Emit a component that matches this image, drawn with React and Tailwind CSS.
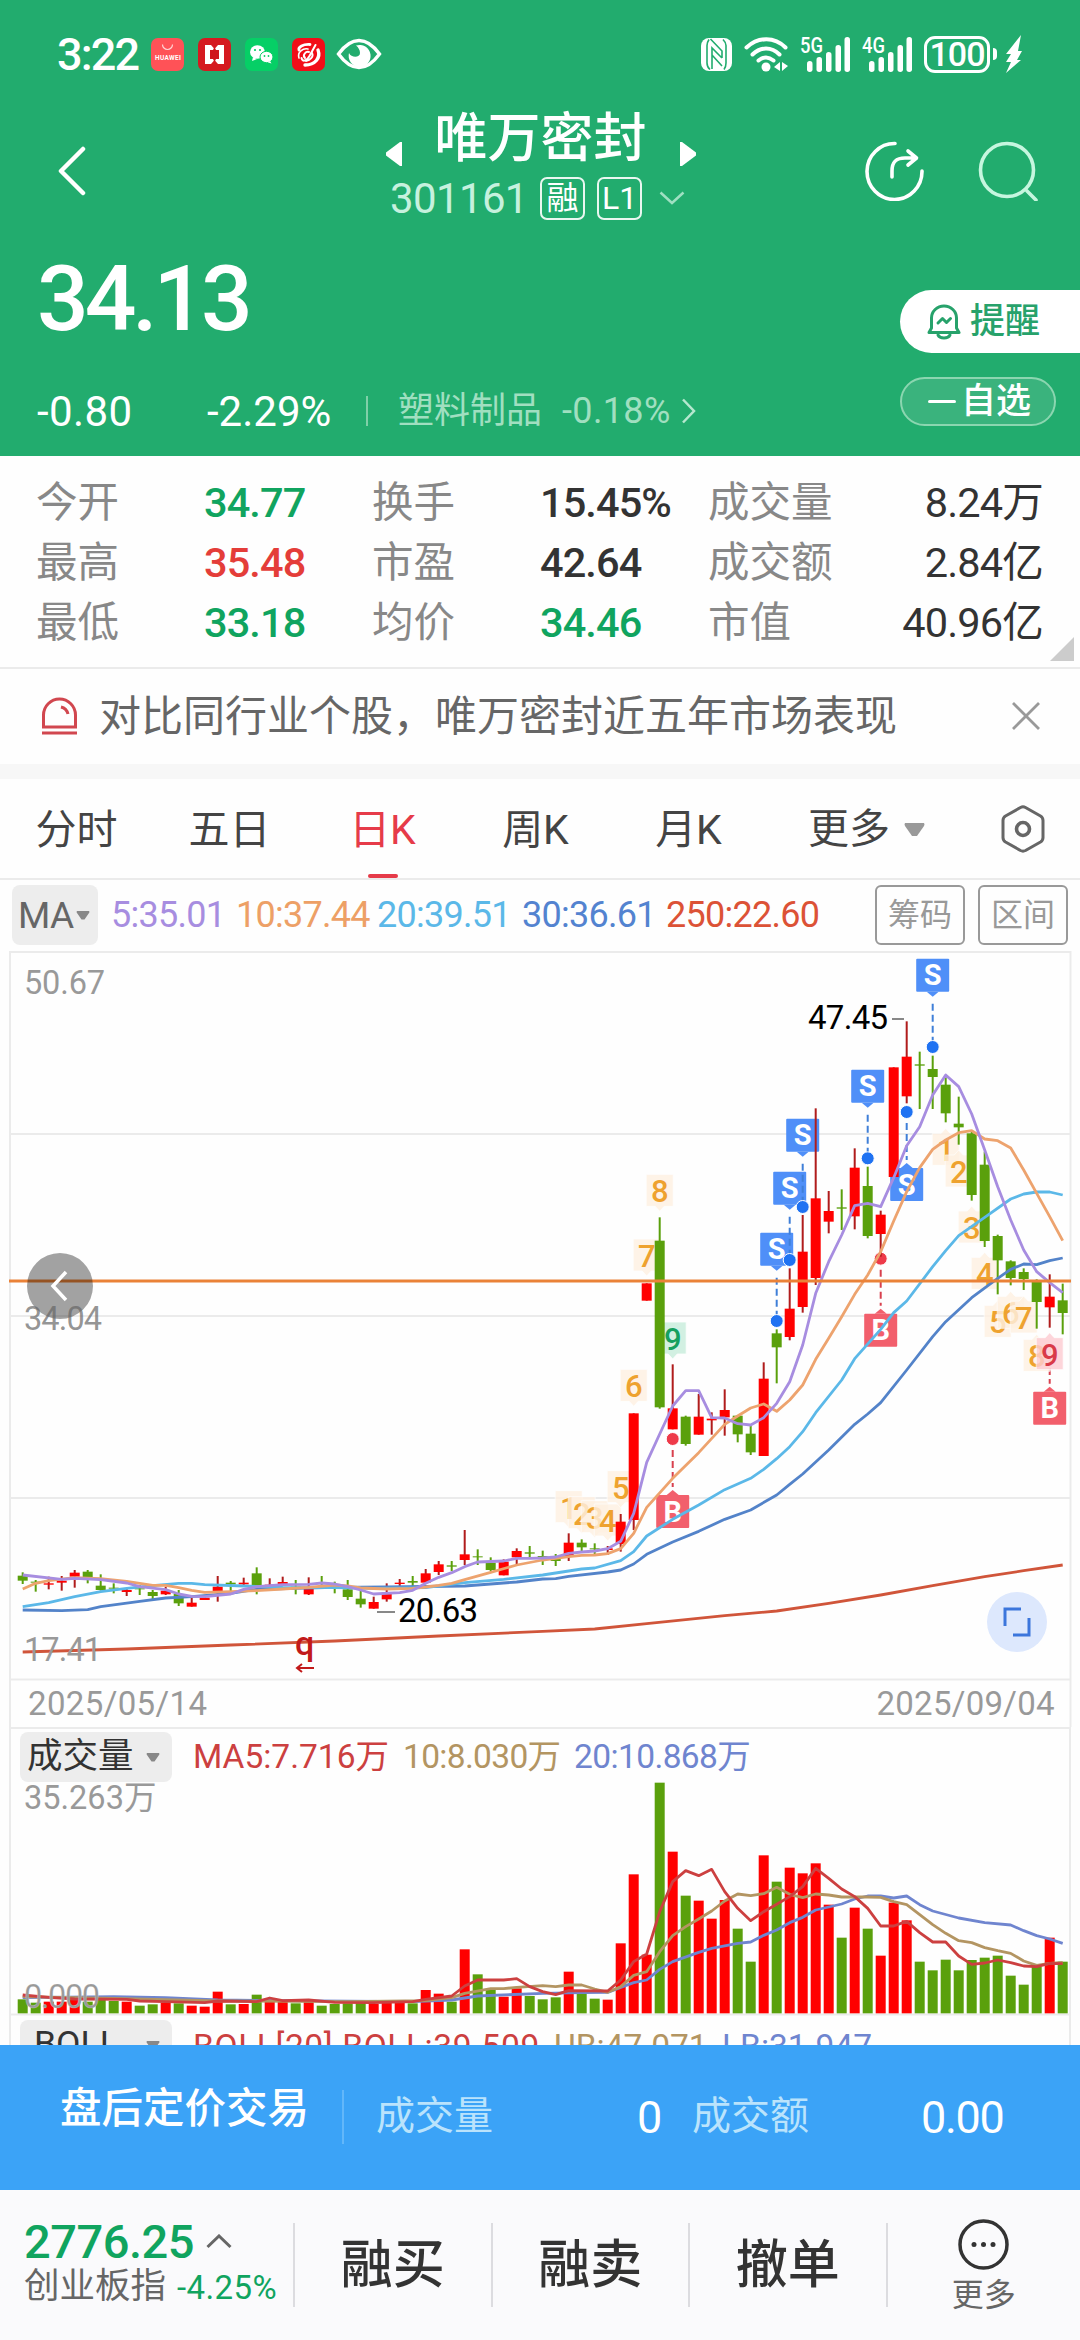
import clsx from "clsx";

const UP = "#ff0000";
const DOWN = "#5aa00c";

// Candle series: direction, body top, body bottom, high, low (1/3 px units)
const CANDLES = [
  ["g", 1907, 1922, 1897, 1932], ["g", 1925, 1928, 1920, 1955], ["r", 1930, 1934, 1910, 1948],
  ["r", 1922, 1928, 1908, 1952], ["r", 1898, 1910, 1890, 1943], ["g", 1895, 1920, 1890, 1930],
  ["g", 1937, 1950, 1903, 1952], ["g", 1943, 1946, 1930, 1960], ["r", 1950, 1956, 1945, 1968],
  ["g", 1945, 1948, 1935, 1965], ["g", 1956, 1968, 1950, 1978], ["r", 1952, 1963, 1940, 1965],
  ["g", 1962, 1990, 1950, 1998], ["r", 1988, 2000, 1972, 2000], ["r", 1973, 1980, 1968, 1980],
  ["r", 1940, 1958, 1908, 1985], ["g", 1928, 1933, 1923, 1955], ["r", 1928, 1933, 1913, 1940],
  ["g", 1900, 1938, 1882, 1963], ["r", 1934, 1938, 1915, 1945], ["r", 1926, 1932, 1910, 1935],
  ["g", 1940, 1943, 1920, 1963], ["r", 1943, 1963, 1912, 1965], ["g", 1928, 1932, 1908, 1940],
  ["g", 1940, 1943, 1925, 1960], ["g", 1948, 1971, 1920, 1980], ["g", 1976, 1993, 1950, 2003],
  ["r", 1986, 2006, 1970, 2006], ["r", 1958, 1978, 1930, 1985], ["r", 1928, 1932, 1917, 1942],
  ["g", 1923, 1928, 1908, 1943], ["r", 1900, 1928, 1887, 1930], ["r", 1873, 1896, 1863, 1905],
  ["g", 1876, 1880, 1863, 1893], ["r", 1843, 1860, 1770, 1875], ["g", 1849, 1852, 1828, 1875],
  ["g", 1868, 1890, 1852, 1893], ["r", 1865, 1906, 1858, 1906], ["r", 1833, 1852, 1825, 1873],
  ["g", 1837, 1841, 1818, 1852], ["g", 1848, 1852, 1832, 1875], ["g", 1857, 1863, 1842, 1878],
  ["r", 1808, 1848, 1780, 1863], ["g", 1808, 1822, 1798, 1835], ["g", 1825, 1828, 1810, 1845],
  ["r", 1825, 1830, 1818, 1845], ["r", 1745, 1812, 1722, 1835], ["r", 1420, 1740, 1420, 1770],
  ["r", 1030, 1082, 1030, 1082], ["g", 902, 1402, 832, 1406], ["r", 1405, 1468, 1273, 1468],
  ["g", 1430, 1512, 1427, 1517], ["r", 1430, 1484, 1362, 1484], ["r", 1436, 1441, 1417, 1484],
  ["r", 1410, 1432, 1348, 1487], ["g", 1427, 1483, 1425, 1507], ["g", 1481, 1537, 1458, 1545],
  ["r", 1316, 1548, 1267, 1548], ["g", 1180, 1222, 1168, 1330], ["r", 1106, 1191, 985, 1201],
  ["r", 935, 1101, 825, 1118], ["r", 775, 1014, 505, 1035], ["r", 813, 845, 753, 880],
  ["g", 802, 806, 748, 870], ["r", 683, 829, 625, 868], ["g", 738, 888, 680, 895],
  ["r", 824, 882, 812, 950], ["r", 382, 711, 382, 711], ["r", 350, 469, 244, 490],
  ["g", 373, 377, 335, 507], ["g", 387, 411, 347, 507], ["g", 434, 520, 413, 547],
  ["g", 551, 562, 470, 614], ["g", 580, 765, 570, 782], ["g", 674, 903, 635, 921],
  ["g", 888, 961, 884, 1063], ["g", 964, 1014, 961, 1036], ["g", 996, 1017, 985, 1050],
  ["g", 1026, 1086, 1018, 1166], ["r", 1070, 1102, 1003, 1163], ["g", 1081, 1119, 1031, 1183],
];

// Moving averages as [candle index, value]
const MA_LINES = [
  { color: "#d0553a", points: [[0, 2136], [8, 2127], [16, 2115], [24, 2103], [32, 2088], [40, 2074], [44, 2067], [48, 2051], [54, 2027], [58, 2013], [62, 1990], [66, 1965], [70, 1937], [74, 1910], [77, 1892], [80, 1875]] },
  { color: "#5383c9", points: [[0, 2010], [3, 2012], [5, 2009], [6, 2000], [9, 1984], [11, 1974], [13, 1970], [16, 1960], [18, 1948], [24, 1942], [28, 1941], [34, 1938], [38, 1926], [40, 1917], [41, 1916], [42, 1909], [45, 1896], [46, 1890], [47, 1872], [48, 1843], [50, 1806], [52, 1774], [54, 1738], [56, 1710], [58, 1665], [59, 1633], [60, 1602], [62, 1530], [64, 1453], [65, 1422], [66, 1388], [68, 1290], [70, 1190], [71, 1145], [73, 1073], [75, 1015], [76, 988], [77, 972], [78, 974], [79, 962], [80, 954]] },
  { color: "#5bb8e8", points: [[0, 2000], [2, 1988], [4, 1970], [6, 1955], [8, 1945], [10, 1937], [12, 1930], [13, 1930], [14, 1934], [17, 1938], [20, 1942], [24, 1943], [27, 1945], [31, 1943], [34, 1928], [37, 1918], [40, 1905], [43, 1887], [44, 1884], [46, 1862], [47, 1835], [48, 1788], [50, 1738], [52, 1695], [54, 1649], [56, 1615], [57, 1588], [58, 1556], [59, 1520], [60, 1475], [61, 1418], [63, 1320], [64, 1256], [66, 1168], [67, 1118], [68, 1083], [70, 980], [71, 932], [72, 887], [74, 832], [76, 777], [77, 762], [78, 756], [79, 756], [80, 765]] },
  { color: "#eda36e", points: [[0, 1947], [1, 1930], [2, 1922], [4, 1913], [6, 1916], [8, 1924], [10, 1936], [11, 1936], [12, 1943], [13, 1951], [14, 1957], [16, 1955], [18, 1952], [20, 1947], [22, 1942], [24, 1935], [25, 1938], [26, 1944], [28, 1947], [30, 1945], [31, 1941], [32, 1936], [33, 1930], [34, 1919], [36, 1897], [38, 1875], [40, 1860], [42, 1850], [43, 1846], [44, 1845], [45, 1841], [46, 1826], [47, 1780], [48, 1702], [50, 1615], [52, 1538], [54, 1453], [55, 1428], [56, 1404], [57, 1392], [58, 1414], [59, 1380], [60, 1335], [61, 1258], [62, 1195], [63, 1130], [64, 1063], [65, 1005], [66, 935], [67, 843], [68, 755], [69, 683], [70, 628], [71, 600], [72, 578], [73, 572], [74, 597], [75, 602], [76, 624], [77, 690], [78, 760], [79, 830], [80, 902]] },
  { color: "#a78de0", points: [[0, 1905], [3, 1918], [4, 1915], [6, 1919], [8, 1929], [9, 1940], [11, 1949], [12, 1962], [13, 1969], [14, 1970], [16, 1962], [17, 1948], [18, 1940], [20, 1934], [22, 1933], [23, 1929], [24, 1932], [25, 1940], [26, 1950], [27, 1962], [29, 1958], [30, 1951], [31, 1930], [32, 1912], [33, 1898], [34, 1880], [35, 1866], [37, 1863], [38, 1855], [39, 1855], [40, 1854], [41, 1851], [42, 1840], [43, 1836], [44, 1833], [45, 1826], [46, 1804], [47, 1720], [48, 1567], [49, 1482], [50, 1398], [51, 1352], [52, 1352], [53, 1433], [54, 1434], [55, 1451], [56, 1455], [57, 1433], [58, 1390], [59, 1325], [60, 1215], [61, 1060], [62, 965], [63, 885], [64, 797], [65, 790], [66, 800], [67, 713], [68, 617], [69, 560], [70, 465], [71, 405], [72, 440], [73, 522], [74, 630], [75, 740], [76, 840], [77, 930], [78, 995], [79, 1028], [80, 1058]] },
];

const TRADES = [
  { kind: "S", i: 58, top: 878, dot: 1143 },
  { kind: "S", i: 59, top: 695, dot: 960 },
  { kind: "S", i: 60, top: 536, dot: 801 },
  { kind: "S", i: 65, top: 389, dot: 655 },
  { kind: "S", i: 70, top: 56, dot: 321 },
  { kind: "S", i: 68, top: 684, dot: 516 },
  { kind: "B", i: 66, top: 1121, dot: 956 },
  { kind: "B", i: 50, top: 1665, dot: 1497 },
  { kind: "B", i: 79, top: 1355, dot: 1185 },
];

const COUNTS = [
  { n: 1, i: 42, top: 1652 }, { n: 2, i: 43, top: 1670 }, { n: 3, i: 44, top: 1682 },
  { n: 4, i: 45, top: 1692 }, { n: 5, i: 46, top: 1592 }, { n: 6, i: 47, top: 1288 },
  { n: 7, i: 48, top: 897 }, { n: 8, i: 49, top: 703 },
  { n: 9, i: 50, top: 1146, fill: "#c9eedd", ink: "#16a05f" },
  { n: 1, i: 71, top: 580, below: true }, { n: 2, i: 72, top: 645, below: true },
  { n: 3, i: 73, top: 813, below: true }, { n: 4, i: 74, top: 952, below: true },
  { n: 5, i: 75, top: 1096, below: true }, { n: 6, i: 76, top: 1069, below: true },
  { n: 7, i: 77, top: 1083, below: true }, { n: 8, i: 78, top: 1198, below: true },
  { n: 9, i: 79, top: 1193, below: true, fill: "#fdcdd3", ink: "#d93a48" },
];

const VOLUMES = [
  898, 908, 905, 905, 900, 905, 900, 903, 905, 917, 913, 908, 910, 917, 920, 875, 913, 912, 884, 905,
  905, 910, 905, 917, 912, 910, 908, 912, 900, 903, 910, 870, 881, 905, 748, 823, 870, 890, 865, 888,
  898, 892, 815, 880, 896, 899, 730, 523, 764, 248, 455, 587, 602, 656, 600, 686, 785, 466, 545, 503,
  520, 490, 614, 713, 623, 686, 767, 608, 661, 785, 811, 779, 811, 780, 773, 767, 827, 854, 800, 713,
  785,
];

const VOLUME_LINES = [
  { color: "#6f85cf", points: [[0, 893], [7, 890], [11, 893], [15, 900], [20, 902], [30, 905], [33, 900], [35, 888], [40, 880], [43, 878], [45, 877], [46, 862], [47, 848], [48, 840], [49, 808], [50, 785], [52, 757], [53, 745], [55, 730], [56, 726], [57, 706], [58, 690], [59, 668], [60, 652], [61, 630], [63, 612], [64, 597], [65, 588], [66, 588], [67, 594], [68, 588], [69, 614], [70, 633], [72, 654], [74, 668], [76, 675], [77, 692], [78, 707], [79, 717], [80, 730]] },
  { color: "#b39562", points: [[0, 890], [7, 895], [15, 903], [25, 905], [31, 902], [33, 893], [34, 880], [36, 866], [37, 866], [38, 862], [40, 857], [41, 860], [42, 855], [43, 855], [44, 867], [45, 877], [46, 860], [47, 826], [48, 815], [49, 755], [50, 707], [51, 680], [52, 657], [53, 633], [54, 603], [55, 582], [56, 587], [57, 581], [58, 562], [59, 583], [60, 593], [61, 582], [62, 585], [63, 591], [65, 591], [66, 592], [67, 605], [68, 614], [70, 674], [71, 700], [72, 722], [73, 728], [74, 743], [75, 752], [76, 760], [77, 783], [78, 796], [79, 790], [80, 787]] },
  { color: "#cc4040", points: [[0, 885], [2, 892], [4, 897], [8, 898], [9, 903], [11, 905], [14, 908], [15, 903], [18, 905], [19, 894], [20, 902], [22, 900], [24, 907], [27, 908], [30, 905], [31, 898], [33, 888], [34, 858], [35, 840], [37, 840], [38, 836], [39, 860], [40, 875], [41, 884], [42, 872], [45, 873], [46, 840], [47, 785], [48, 762], [49, 635], [50, 545], [51, 512], [52, 527], [53, 508], [54, 575], [55, 625], [56, 662], [57, 635], [58, 613], [59, 590], [60, 560], [61, 505], [62, 535], [63, 567], [64, 590], [65, 625], [66, 678], [67, 678], [68, 664], [69, 698], [70, 726], [71, 726], [72, 768], [73, 793], [74, 789], [75, 780], [76, 788], [77, 798], [78, 800], [79, 790], [80, 791]] },
];

const px = (i) => 22.7 + i * 13;
const py = (v) => v / 3 - 11;
const vy = (v) => v / 3 - 27;
const toPoints = (points, y) => points.map(([i, v]) => `${px(i)},${y(v)}`).join(" ");

function SignalBars({ label }) {
  return (
    <svg width="50" height="46" viewBox="0 -5 50 46" fill="#fff">
      <text x="0" y="17" fontSize="22" fontWeight="500" textLength="23" lengthAdjust="spacingAndGlyphs">
        {label}
      </text>
      <rect x="7" y="25" width="5.5" height="11" rx="2.7" />
      <rect x="16.500" y="21" width="5.5" height="15" rx="2.7" />
      <rect x="26" y="16" width="5.5" height="20" rx="2.7" />
      <rect x="35.500" y="9" width="5.5" height="27" rx="2.7" />
      <rect x="44.500" y="1" width="5.5" height="35" rx="2.7" />
    </svg>
  );
}

function StatusBar() {
  return (
    <div className="flex h-[108px] items-center justify-between pl-[57px] pr-[57px]">
      <div className="flex items-center">
        <span className="w-[94px] text-[45px] font-medium leading-none tracking-[-0.04em]">3:22</span>
        <svg width="33" height="33" viewBox="0 0 33 33" className="mr-[14px]">
          <rect width="33" height="33" rx="7" fill="#ff5257" />
          <path d="M11.500 6.500a5 5 0 0 0 10 0" fill="none" stroke="#ffd5d5" strokeWidth="1.200" />
          <text x="4" y="21.500" fontSize="6.500" fontWeight="700" fill="#fff" textLength="26">HUAWEI</text>
        </svg>
        <svg width="33" height="33" viewBox="0 0 33 33" className="mr-[14px]">
          <rect width="33" height="33" rx="7" fill="#d5191f" />
          <path d="M7 7h6l3.500 4L20 7h6v19h-6l-3.500-4-3.500 4H7z" fill="#fff" />
          <path d="M16.500 9l1.500 3h3v9h-3l-1.500 3-1.500-3h-3v-9h3z" fill="#cf141b" />
        </svg>
        <svg width="33" height="33" viewBox="0 0 33 33" className="mr-[14px]">
          <rect width="33" height="33" rx="7" fill="#06cf66" />
          <ellipse cx="12.500" cy="14" rx="7.500" ry="6.800" fill="#fff" />
          <path d="M8 19l-1 4 5-2z" fill="#fff" />
          <ellipse cx="21.500" cy="19" rx="6.500" ry="5.700" fill="#fff" stroke="#06cf66" strokeWidth="1" />
          <path d="M25 23l1.500 2.500-4-1.200z" fill="#fff" />
          <g fill="#06cf66">
            <circle cx="10" cy="12" r="1.100" /><circle cx="15" cy="12" r="1.100" />
            <circle cx="19.500" cy="18" r=".9" /><circle cx="23.500" cy="18" r=".9" />
          </g>
        </svg>
        <svg width="33" height="33" viewBox="0 0 33 33" className="mr-[11px]">
          <rect width="33" height="33" rx="7" fill="#f20d18" />
          <g fill="none" stroke="#fff" strokeLinecap="round">
            <path d="M18 6.500C11 6 6 9 7 12" strokeWidth="2.800" />
            <path d="M7 20c-2-6 4-10 9-9" strokeWidth="1.600" />
            <path d="M9.500 20c1 5 6 2 8-2l6-11" strokeWidth="2" />
            <path d="M13 20c-3-3 1-7 4-6" strokeWidth="2" />
            <path d="M20 15c2 4-2 7-6 8" strokeWidth="2" />
            <path d="M26 12c3 8-3 15-13 15" strokeWidth="3.400" />
          </g>
        </svg>
        <svg width="46" height="32" viewBox="0 0 46 32">
          <path d="M2.500 16C9 7 15 2.500 23 2.500S37 7 43.500 16C37 25 31 29.500 23 29.500S9 25 2.500 16z" fill="none" stroke="#fff" strokeWidth="3.400" />
          <path d="M20 7.500A11 11 0 1 1 13 15c2 5 11 5 11 0 0-3-1.500-5.500-4-7.500z" fill="#fff" />
        </svg>
      </div>
      <div className="flex items-center">
        <svg width="31" height="33" viewBox="0 0 31 33" className="mr-[12px]">
          <rect width="31" height="33" rx="8" fill="#fff" />
          <g fill="none" stroke="#22ac6e" strokeWidth="1.600">
            <path d="M8 1.500q-2 3-2 6V25q0 4 3 6.500M22 1.500q3 3 3 6V25q0 4-2 6.500" />
            <path d="M11 31V10l10 10M9.500 1l11.500 12v7M11 17l10 11" />
          </g>
        </svg>
        <svg width="45" height="35" viewBox="0 0 45 35" className="mr-[11px]" fill="none" stroke="#fff" strokeLinecap="round">
          <path d="M2.500 10.500c12-11 28-11 39 0" strokeWidth="4" />
          <path d="M8.500 17.500c8-8 19-8 27 0" strokeWidth="4" />
          <path d="M14.500 23.500c5-4 10-4 15 0" strokeWidth="4" />
          <circle cx="22" cy="30" r="4.500" fill="#fff" stroke="none" />
          <path d="M36 25v9l-6-4zM38 25v9l6-5z" fill="#fff" stroke="none" />
        </svg>
        <div className="mr-[12px]"><SignalBars label="5G" /></div>
        <div className="mr-[12px]"><SignalBars label="4G" /></div>
        <div className="flex h-[37px] w-[66px] items-center justify-center rounded-[11px] border-[3px] border-white text-[34px] font-medium leading-none tracking-[-0.03em]">
          100
        </div>
        <div className="ml-[3px] h-[12px] w-[4px] rounded-r bg-white" />
        <svg width="18" height="38" viewBox="0 0 18 38" className="ml-[8px]">
          <path d="M16 0L1 19h5l-5 8h5L1 38 16 25h-4l5-9h-4z" fill="#fff" />
        </svg>
      </div>
    </div>
  );
}

function TitleBar() {
  return (
    <div className="grid h-[140px] grid-cols-[340px_400px_340px]">
      <div className="flex items-start pl-[57px] pt-[38px]">
        <svg width="30" height="50" viewBox="0 0 30 50" fill="none" stroke="#fff" strokeWidth="4.500" strokeLinecap="round" strokeLinejoin="round">
          <path d="M26 3L4 25l22 22" />
        </svg>
      </div>
      <div>
        <div className="flex h-[60px] items-center justify-center pl-[1px]">
          <svg width="18" height="26" viewBox="0 0 18 26" className="mt-[32px]">
            <path d="M17 1v24h-2L1 14.500v-3L15 1z" fill="#fff" />
          </svg>
          <span className="mx-[32px] mt-[2px] w-[212px] whitespace-nowrap text-[53px] font-medium leading-[60px]">唯万密封</span>
          <svg width="18" height="26" viewBox="0 0 18 26" className="mt-[32px]">
            <path d="M1 1v24h2l14-10.500v-3L3 1z" fill="#fff" />
          </svg>
        </div>
        <div className="mt-[9px] flex h-[42px] items-center pl-[50px]">
          <span className="w-[150px] pt-[2px] text-[42px] leading-none tracking-[-0.015em] text-[#c6f1de]">301161</span>
          <span className="flex h-[43px] w-[45px] items-center justify-center rounded-[7px] border-2 border-white/90 text-[32px] leading-none">融</span>
          <span className="ml-[12px] flex h-[43px] w-[45px] items-center justify-center rounded-[7px] border-2 border-white/90 text-[32px] leading-none">L1</span>
          <svg width="26" height="14" viewBox="0 0 26 14" className="ml-[17px]" fill="none" stroke="#9fe0c2" strokeWidth="2.500">
            <path d="M1.500 1.500L13 12 24.500 1.500" />
          </svg>
        </div>
      </div>
      <div className="flex items-start justify-end gap-[54px] pr-[42px] pt-[33px]">
        <svg width="60" height="60" viewBox="0 0 60 60" fill="none" stroke="#fff" strokeWidth="3.600" strokeLinecap="round" strokeLinejoin="round">
          <path d="M31 2.500A27.500 28 0 1 0 58 30" />
          <path d="M28 36V30c0-10 5-13 13-13h11M44 10l8.500 7L44 24" />
        </svg>
        <svg width="60" height="60" viewBox="0 0 60 60" fill="none" stroke="#c6f6df" strokeWidth="3.600" strokeLinecap="round">
          <circle cx="29" cy="29" r="26.500" />
          <path d="M49 50l9 9" />
        </svg>
      </div>
    </div>
  );
}

function PriceHeader() {
  return (
    <div className="flex h-[208px] justify-between">
      <div>
        <div className="pl-[37px] pt-[5px] text-[91px] font-medium leading-[92px] tracking-[-0.045em]">34.13</div>
        <div className="mt-[42px] flex h-[48px] items-center whitespace-nowrap pl-[37px] text-[42px] leading-none">
          <span className="w-[170px] pt-[1px] tracking-[0.01em]">-0.80</span>
          <span className="w-[159px] pt-[1px]">-2.29%</span>
          <span className="h-[30px] w-[2px] bg-[#7fd0a8]" />
          <span className="ml-[30px] text-[36px] text-[#a0dfc0]">塑料制品</span>
          <span className="ml-[20px] text-[36px] tracking-[0.01em] text-[#a0dfc0]">-0.18%</span>
          <svg width="16" height="26" viewBox="0 0 16 26" className="ml-[10px]" fill="none" stroke="#b5e8cf" strokeWidth="2.500">
            <path d="M2 1.500L13 13 2 24.500" />
          </svg>
        </div>
      </div>
      <div className="w-[180px] pt-[42px]">
        <div className="flex h-[63px] items-center rounded-l-full bg-white pl-[27px] text-[#27a26b]">
          <svg width="34" height="36" viewBox="0 0 34 36" fill="none" stroke="currentColor" strokeWidth="3" strokeLinecap="round" strokeLinejoin="round">
            <path d="M4.500 24V14a12.500 12 0 0 1 25 0v10l2.500 4.500H2z" />
            <path d="M11 31c2 4 10 4 12 0M11 19l4.500-4.500 4 4 4-4" />
          </svg>
          <span className="ml-[9px] text-[35px] font-medium leading-none">提醒</span>
        </div>
        <div className="mt-[24px] flex h-[49px] w-[156px] items-center rounded-full border-2 border-[#8bd6b0] bg-[#3ab37d] pl-[26px]">
          <span className="h-[3px] w-[28px] rounded bg-white" />
          <span className="ml-[5px] text-[35px] font-medium leading-none">自选</span>
        </div>
      </div>
    </div>
  );
}

const STATS = [
  ["今开", "34.77", "g", "换手", "15.45%", "k", "成交量", "8.24万"],
  ["最高", "35.48", "r", "市盈", "42.64", "k", "成交额", "2.84亿"],
  ["最低", "33.18", "g", "均价", "34.46", "g", "市值", "40.96亿"],
];
const INK = { g: "text-[#10a45f]", r: "text-[#e43d39]", k: "text-[#333]" };

function Stats() {
  return (
    <div className="relative h-[213px] border-b-2 border-[#ebebeb] pl-[36px] pr-[37px] pt-[17px]">
      {STATS.map(([a, av, ac, b, bv, bc, c, cv]) => (
        <div key={a} className="grid h-[60px] grid-cols-[168px_168px_168px_168px_168px_1fr] items-center whitespace-nowrap text-[41.500px] leading-none text-[#888]">
          <span>{a}</span>
          <span className={clsx("font-medium tracking-[-0.022em]", INK[ac])}>{av}</span>
          <span>{b}</span>
          <span className={clsx("font-medium tracking-[-0.022em]", INK[bc])}>{bv}</span>
          <span>{c}</span>
          <span className="flex justify-end tracking-[-0.02em] text-[#333]">{cv}</span>
        </div>
      ))}
      <svg width="24" height="24" viewBox="0 0 24 24" className="absolute bottom-[6px] right-[6px]">
        <path d="M24 0v24H0z" fill="#ccc" />
      </svg>
    </div>
  );
}

function Notice() {
  return (
    <div className="flex h-[96px] items-center pl-[41px] pr-[40px]">
      <svg width="37" height="38" viewBox="0 0 37 38" fill="none" stroke="#d1474f" strokeWidth="3">
        <path d="M2.500 30V18a16 16 0 0 1 32 0v12z" />
        <path d="M1 36h35M20 10c4 1 6 3 7 7" />
      </svg>
      <span className="ml-[21px] flex-1 whitespace-nowrap pt-[2px] text-[42px] leading-none text-[#666]">
        对比同行业个股，唯万密封近五年市场表现
      </span>
      <svg width="28" height="28" viewBox="0 0 28 28" stroke="#999" strokeWidth="2.800">
        <path d="M1 1l26 26M27 1L1 27" />
      </svg>
    </div>
  );
}

function Tabs() {
  return (
    <div className="flex h-[101px] items-stretch border-b-2 border-[#ebebeb] text-[41px] leading-none text-[#444]">
      {["分时", "五日", "日K", "周K", "月K"].map((tab) => (
        <div key={tab} className="flex w-[153px] flex-col items-center">
          <div className={clsx("flex flex-1 items-center pt-[4px]", tab === "日K" && "text-[#e63b49]")}>{tab}</div>
          <div className={clsx("-mt-1 h-[4px] w-[30px] rounded-full", tab === "日K" && "bg-[#e63b49]")} />
        </div>
      ))}
      <div className="flex items-center pl-[43px] pt-[2px]">
        更多
        <svg width="21" height="14" viewBox="0 0 21 14" className="ml-[14px]">
          <path d="M1 0h19q1 1 0 3l-7 10H8L1 3Q0 1 1 0z" fill="#999" />
        </svg>
      </div>
      <div className="ml-auto flex items-center pr-[35px]">
        <svg width="44" height="48" viewBox="0 0 44 48" fill="none" stroke="#666" strokeWidth="3" strokeLinejoin="round">
          <path d="M19.500 2.500q2.500-1.300 5 0l15 8.500q2.500 1.500 2.500 4.500v17q0 3-2.500 4.500l-15 8.500q-2.500 1.300-5 0L4.500 37Q2 35.500 2 32.500v-17Q2 12.500 4.500 11z" />
          <circle cx="22" cy="24" r="6.500" strokeWidth="3.600" />
        </svg>
      </div>
    </div>
  );
}

function Caret() {
  return (
    <svg width="14" height="9" viewBox="0 0 14 9">
      <path d="M1 0h12q1 1 0 2L8.500 8.500h-3L1 2Q0 1 1 0z" fill="#888" />
    </svg>
  );
}

function MaLegend() {
  return (
    <div className="flex h-[71px] items-center pb-[1px] pl-[12px] pr-[12px] text-[36px] leading-none tracking-[-0.02em]">
      <div className="flex h-[60px] w-[86px] items-center gap-[3px] rounded-lg bg-[#ededed] pl-[6px] text-[37px] text-[#666]">
        MA
        <Caret />
      </div>
      <span className="ml-[13px] w-[125px] text-[#a78de0]">5:35.01</span>
      <span className="w-[141px] text-[#eda066]">10:37.44</span>
      <span className="w-[145px] text-[#5bb8e8]">20:39.51</span>
      <span className="w-[144px] text-[#5383d0]">30:36.61</span>
      <span className="text-[#dc5236]">250:22.60</span>
      <div className="ml-auto flex gap-[13px] text-[32px] tracking-normal text-[#999]">
        <span className="flex h-[60px] w-[90px] items-center justify-center rounded-[6px] border-2 border-[#999]">筹码</span>
        <span className="flex h-[60px] w-[90px] items-center justify-center rounded-[6px] border-2 border-[#999]">区间</span>
      </div>
    </div>
  );
}

function TradeMark({ kind, i, top, dot }) {
  const x = px(i);
  const y = py(top);
  const d = py(dot);
  const above = dot > top;
  const fill = kind === "S" ? "#4f8ff8" : "#f25f6c";
  const line = kind === "S" ? "#3f7fd8" : "#d8404e";
  return (
    <g>
      <path
        d={above ? `M${x} ${y + 45}V${d - 6}` : `M${x} ${d + 11}V${y - 8}`}
        stroke={line}
        strokeWidth="2"
        strokeDasharray="7 4"
      />
      <rect x={x - 16.5} y={y} width="33" height="33" rx="1" fill={fill} />
      <path
        d={above ? `M${x - 6} ${y + 33}l6 5 6-5z` : `M${x - 6} ${y}l6-5 6 5z`}
        fill={fill}
      />
      <text x={x} y={y + 26.5} fontSize="29" fontWeight="700" fill="#fff" textAnchor="middle">
        {kind}
      </text>
    </g>
  );
}

function CountMark({ n, i, top, below, fill = "#fff1e2", ink = "#eea22f" }) {
  const x = px(i);
  const y = py(top);
  return (
    <g>
      <g fill={fill} stroke="#fff" strokeWidth=".8" opacity=".82">
        <path
          d={
            below
              ? `M${x - 13.500} ${y}h9l4.500-5 4.500 5h9v32h-27z`
              : `M${x - 13.500} ${y}h27v32h-9l-4.500 5-4.500-5h-9z`
          }
        />
      </g>
      <text x={x} y={y + 28} fontSize="31" fontWeight="500" fill={ink} textAnchor="middle">
        {n}
      </text>
    </g>
  );
}

function PriceChart() {
  return (
    <svg width="1080" height="776" viewBox="0 0 1080 776" className="block">
      <g stroke="#ebebeb" strokeWidth="2" fill="none">
        <path d="M10 776V1H1070.500V776M10 183H1070M10 365H1070M10 547H1070M10 728.500H1070" />
      </g>
      {TRADES.map((t) => <TradeMark key={t.i} {...t} />)}
      {COUNTS.map((c) => <CountMark key={c.i} {...c} />)}
      {TRADES.filter((t) => t.i !== 79).map((t) => (
        <circle
          key={t.i}
          cx={px(t.i)}
          cy={py(t.dot)}
          r="6.500"
          fill={t.kind === "S" ? "#1f72f2" : "#ee3a49"}
          stroke="#fff"
          strokeWidth="1"
        />
      ))}
      {CANDLES.map(([dir, top, bottom, high, low], i) => (
        <g key={i} fill={dir === "r" ? UP : DOWN}>
          <rect x={px(i) - 1} y={py(high)} width="2" height={(low - high) / 3} fill={dir === "r" ? "#b01c1c" : DOWN} />
          <rect x={px(i) - 5} y={py(top)} width="10" height={(bottom - top) / 3} />
        </g>
      ))}
      {MA_LINES.map((l) => (
        <polyline key={l.color} points={toPoints(l.points, py)} fill="none" stroke={l.color} strokeWidth="2.800" strokeLinejoin="round" />
      ))}
      <path d="M9 330H1071" stroke="#ea8238" strokeWidth="3" />

      <g fontSize="32.500" fill="#999">
        <text x="24" y="43" textLength="81">50.67</text>
        <text x="24" y="710" textLength="78">17.41</text>
      </g>
      <g fontSize="33" fill="#000">
        <text x="808" y="77.500" textLength="80">47.45</text>
        <text x="398" y="671" textLength="80">20.63</text>
      </g>
      <path d="M892 68h12M377 661h18" stroke="#888" strokeWidth="2" />
      <text x="304.500" y="704" fontSize="34" fontWeight="500" fill="#c21a1a" textAnchor="middle">q</text>
      <path d="M314 717h-17M302 713l-5 4 5 4" fill="none" stroke="#c21a1a" strokeWidth="2" />

      <circle cx="60" cy="335" r="33" fill="#000" fillOpacity=".36" />
      <path d="M66 321L53 335l13 14" fill="none" stroke="#fff" strokeWidth="3.500" />
      <text x="24" y="379" fontSize="32.500" fill="#666" fillOpacity=".7" textLength="78">34.04</text>

      <circle cx="1017" cy="671" r="30" fill="#dde8fd" />
      <path d="M1005 675v-17h16M1029 667v17h-16" fill="none" stroke="#3c76dc" strokeWidth="3" />

      <g fontSize="33" fill="#999">
        <text x="28" y="764" textLength="179">2025/05/14</text>
        <text x="876.500" y="764" textLength="178">2025/09/04</text>
      </g>
    </svg>
  );
}

function IndicatorRow({ name, children }) {
  return (
    <div className="flex h-[50px] items-center pl-[9px] text-[33.500px] leading-none">
      <div className="flex h-[50px] w-[152px] shrink-0 items-center justify-between rounded-lg bg-[#ededed] pl-[7px] pr-[12px] text-[35.500px] text-[#333]">
        <span>{name}</span>
        <Caret />
      </div>
      {children}
    </div>
  );
}

function VolumeChart() {
  return (
    <div className="mx-[9px] h-[288px] border-x-2 border-t-2 border-[#ebebeb] pt-[3px]">
      <IndicatorRow name="成交量">
        <div className="flex whitespace-nowrap">
          <span className="ml-[21px] w-[210px] text-[#cc4040]">MA5:7.716万</span>
          <span className="w-[171px] tracking-[-0.02em] text-[#b39562]">10:8.030万</span>
          <span className="tracking-[-0.018em] text-[#6f85cf]">20:10.868万</span>
        </div>
      </IndicatorRow>
      <svg width="1080" height="233" viewBox="0 55 1080 233" className="-ml-[11px] block overflow-visible">
        <path d="M10 287.500H1070" stroke="#ebebeb" strokeWidth="2" />
        {VOLUMES.map((v, i) => (
          <rect key={i} x={px(i) - 5} y={vy(v)} width="10" height={(940 - v) / 3} fill={CANDLES[i][0] === "r" ? UP : DOWN} />
        ))}
        {VOLUME_LINES.map((l) => (
          <polyline key={l.color} points={toPoints(l.points, vy)} fill="none" stroke={l.color} strokeWidth="2.800" strokeLinejoin="round" />
        ))}
        <g fontSize="32.500" fill="#999">
          <text x="24" y="82">35.263万</text>
          <text x="24" y="281" textLength="76" stroke="#fff" strokeOpacity=".3" strokeWidth=".6">0.000</text>
        </g>
      </svg>
    </div>
  );
}

function AfterHours() {
  return (
    <div className="flex h-[145px] items-start whitespace-nowrap bg-[#3ba3f7] pt-[37px] leading-none text-white">
      <span className="w-[281px] pl-[60px] pt-[6px] text-[41.500px] font-medium">盘后定价交易</span>
      <span className="ml-[61px] mt-[8px] h-[54px] w-[2px] bg-[#62b7fa]" />
      <span className="ml-[32px] w-[261px] pt-[15px] text-[39px] text-[#bae3fc]">成交量</span>
      <span className="w-[55px] pt-[13px] text-[45px]">0</span>
      <span className="w-[229px] pt-[15px] text-[39px] text-[#bae3fc]">成交额</span>
      <span className="pt-[13px] text-[45px] tracking-[-0.03em]">0.00</span>
    </div>
  );
}

function BottomBar() {
  return (
    <div className="flex h-[150px] bg-[#fafafc] leading-none text-[#333]">
      <div className="w-[293px] whitespace-nowrap pl-[24px] pt-[28px]">
        <div className="flex items-center text-[47px] font-medium tracking-[-0.01em] text-[#10a45f]">
          2776.25
          <svg width="26" height="15" viewBox="0 0 26 15" className="ml-[12px]" fill="none" stroke="#666" strokeWidth="3">
            <path d="M1.500 13L13 2l11.500 11" />
          </svg>
        </div>
        <div className="mt-[4px] flex items-center text-[35.500px] text-[#666]">
          创业板指
          <span className="ml-[11px] pt-[2px] text-[33px] tracking-[0.012em] text-[#10a45f]">-4.25%</span>
        </div>
      </div>
      {["融买", "融卖", "撤单"].map((action) => (
        <div key={action} className="flex w-[197.500px] items-center">
          <span className="h-[84px] w-[2px] bg-[#dcdce0]" />
          <span className="flex-1 pt-[2px] text-center text-[52px] font-medium">{action}</span>
        </div>
      ))}
      <div className="flex flex-1 items-center">
        <span className="h-[84px] w-[2px] bg-[#dcdce0]" />
        <div className="flex flex-1 flex-col items-center gap-[9px] text-[32px] text-[#666]">
          <svg width="51" height="51" viewBox="0 0 51 51">
            <circle cx="25.500" cy="25.500" r="23.500" fill="none" stroke="#333" strokeWidth="3.500" />
            <g fill="#333">
              <circle cx="16" cy="25.500" r="2.500" />
              <circle cx="25.500" cy="25.500" r="2.500" />
              <circle cx="35" cy="25.500" r="2.500" />
            </g>
          </svg>
          更多
        </div>
      </div>
    </div>
  );
}

export default function App() {
  return (
    <div className="h-[2340px] w-[1080px] overflow-hidden bg-[#fefefe] font-[Roboto,'Noto_Sans_CJK_SC',sans-serif]">
      <header className="h-[456px] bg-[#22ac6e] text-white">
        <StatusBar />
        <TitleBar />
        <PriceHeader />
      </header>
      <Stats />
      <div className="-mt-px"><Notice /></div>
      <div className="h-[15px] bg-[#f7f7f7]" />
      <Tabs />
      <MaLegend />
      <PriceChart />
      <VolumeChart />
      <div className="mx-[9px] h-[30px] overflow-hidden border-x-2 border-[#ebebeb] pt-[5px]">
        <IndicatorRow name={<span className="pl-[7px]">BOLL</span>}>
          <div className="flex whitespace-nowrap pt-[3px]">
            <span className="ml-[21px] w-[361px] tracking-[0.018em] text-[#cc4040]">BOLL[20] BOLL:39.509</span>
            <span className="w-[168px] text-[#b39562]">UB:47.071</span>
            <span className="text-[#6f85cf]">LB:31.947</span>
          </div>
        </IndicatorRow>
      </div>
      <AfterHours />
      <BottomBar />
    </div>
  );
}
